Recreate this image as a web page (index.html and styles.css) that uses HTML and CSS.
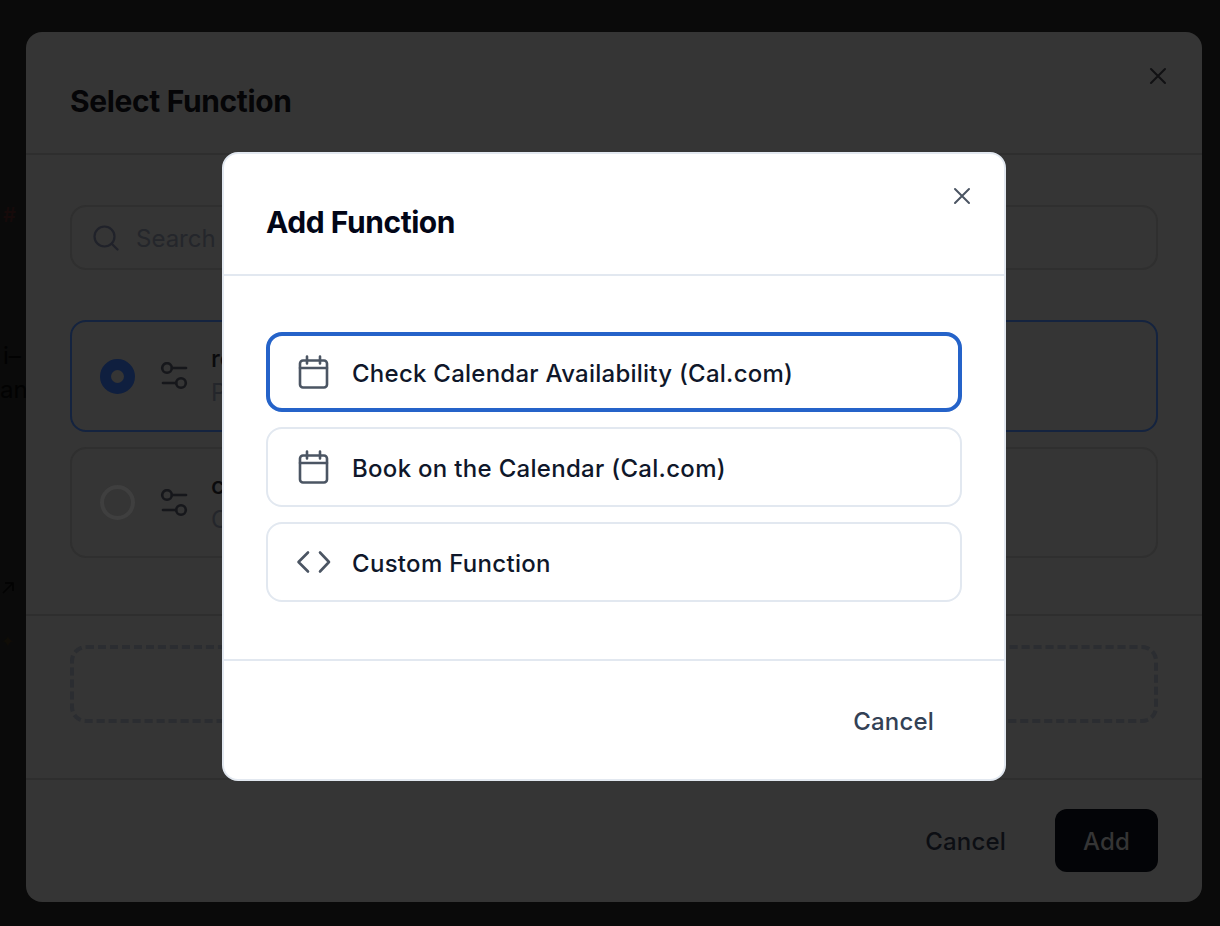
FILE: index.html
```html
<!DOCTYPE html>
<html lang="en">
<head>
  <meta charset="UTF-8">
  <title>Add Function</title>
  <link rel="stylesheet" href="styles.css">
</head>
<body>

<div class="page-bits">
  <span class="bit bit-hash">#</span>
  <span class="bit bit-hi">i–</span>
  <span class="bit bit-and">anc</span>
  <svg class="bit bit-arrow" viewBox="0 0 12 12"><path d="M1 11L11 1M3 1h8v8"/></svg>
  <span class="bit bit-star">✦</span>
</div>

<div class="outer-wrap">
  <div class="outer-modal">
    <div class="outer-head">
      <h2>Select Function</h2>
      <svg class="outer-close" viewBox="0 0 18 18"><path d="M2 2l14 14M16 2L2 16"/></svg>
    </div>

    <div class="outer-list">
      <div class="search">
        <svg viewBox="0 0 26 26"><circle cx="11.5" cy="11.5" r="10"/><path d="M19 19l5.500 5.500"/></svg>
        <span>Search</span>
      </div>

      <div class="fn-row fn-row-on">
        <span class="radio radio-on"></span>
        <svg class="sliders" viewBox="0 0 28 28"><circle cx="7" cy="6" r="4.800"/><path d="M12 6h14"/><circle cx="21" cy="21" r="4.800"/><path d="M3 21h13"/></svg>
        <div class="fn-text">
          <b>reserve_slot</b>
          <span>Preserve a slot</span>
        </div>
      </div>

      <div class="fn-row">
        <span class="radio"></span>
        <svg class="sliders" viewBox="0 0 28 28"><circle cx="7" cy="6" r="4.800"/><path d="M12 6h14"/><circle cx="21" cy="21" r="4.800"/><path d="M3 21h13"/></svg>
        <div class="fn-text">
          <b>check_slot</b>
          <span>Check a slot</span>
        </div>
      </div>
    </div>

    <div class="outer-add">
      <div class="dashed"></div>
    </div>

    <div class="outer-foot">
      <button class="ghost">Cancel</button>
      <button class="dark">Add</button>
    </div>
  </div>
</div>

<div class="inner-wrap">
  <div class="inner-modal">
    <div class="inner-head">
      <h2>Add Function</h2>
      <svg class="inner-close" viewBox="0 0 18 18"><path d="M2 2l14 14M16 2L2 16"/></svg>
    </div>

    <div class="inner-body">
      <div class="option option-on">
        <svg viewBox="0 0 36 36"><rect x="4" y="6.500" width="27" height="27" rx="3"/><path d="M4 14h27M11 2.500v7M24 2.500v7"/></svg>
        <span>Check Calendar Availability (Cal.com)</span>
      </div>
      <div class="option">
        <svg viewBox="0 0 36 36"><rect x="4" y="6.500" width="27" height="27" rx="3"/><path d="M4 14h27M11 2.500v7M24 2.500v7"/></svg>
        <span>Book on the Calendar (Cal.com)</span>
      </div>
      <div class="option">
        <svg viewBox="0 0 36 36"><path d="M12 8.500L2.500 18l9.500 9.500M24 8.500l9 9.500-9 9.500"/></svg>
        <span>Custom Function</span>
      </div>
    </div>

    <div class="inner-foot">
      <button class="cancel">Cancel</button>
    </div>
  </div>
</div>

</body>
</html>
```

FILE: styles.css
```css
* {
  box-sizing: border-box;
}

html, body {
  height: 100%;
}

body {
  margin: 0;
  background: #0a0a0a;
  font-family: Inter, "Liberation Sans", sans-serif;
  overflow: hidden;
}

h2 {
  margin: 0;
}

button {
  font-family: inherit;
  border: none;
  background: none;
  padding: 0;
}

/* bits of the page behind the dialogs */
.page-bits {
  position: absolute;
  inset: 0;
  font-size: 24px;
  color: #020202;
}

.bit {
  position: absolute;
}

.bit-hash {
  left: 3px;
  top: 203px;
  color: #160a0a;
  font-size: 20px;
  font-weight: 600;
}

.bit-hi {
  left: 3px;
  top: 341px;
}

.bit-and {
  left: 0;
  top: 375px;
}

.bit-arrow {
  left: 2px;
  top: 582px;
  width: 12px;
  height: 12px;
  fill: none;
  stroke: #020202;
  stroke-width: 1.500;
}

.bit-star {
  left: 1px;
  top: 631px;
  font-size: 16px;
  color: #100d07;
}

/* back dialog */
.outer-wrap {
  position: absolute;
  inset: 0;
  padding: 32px 18px 24px 26px;
}

.outer-modal {
  height: 870px;
  background: #353535;
  border-radius: 16px;
  display: flex;
  flex-direction: column;
}

.outer-head {
  position: relative;
  height: 123px;
  padding: 49px 44px 0;
  border-bottom: 2px solid #2e2e2e;
}

.outer-head h2 {
  font-size: 30px;
  line-height: 40px;
  font-weight: 650;
  letter-spacing: -0.37px;
  color: #050507;
}

.outer-close {
  position: absolute;
  top: 35px;
  right: 35px;
  width: 18px;
  height: 18px;
  fill: none;
  stroke: #111113;
  stroke-width: 2;
  stroke-linecap: round;
}

.outer-list {
  height: 461px;
  padding: 50px 44px 0;
  display: flex;
  flex-direction: column;
  gap: 15px;
  border-bottom: 2px solid #2e2e2e;
}

.search {
  height: 65px;
  margin-bottom: 35px;
  padding: 1px 0 0 21px;
  border: 2px solid #2f2f2f;
  border-radius: 16px;
  display: flex;
  align-items: center;
  gap: 17px;
  font-size: 24px;
  color: #24262b;
}

.search svg {
  width: 26px;
  height: 26px;
  fill: none;
  stroke: #20222a;
  stroke-width: 2.2;
  stroke-linecap: round;
}

.fn-row {
  height: 111px;
  padding-left: 28px;
  border: 2px solid #2f2f2f;
  border-radius: 16px;
  display: flex;
  align-items: center;
  gap: 24px;
}

.fn-row-on {
  height: 112px;
  border-color: #14233f;
}

.radio {
  width: 35px;
  height: 35px;
  border: 4px solid #3f3f3f;
  border-radius: 50%;
  flex-shrink: 0;
  margin-right: 1px;
}

.radio-on {
  border: 11px solid #0f1f3f;
  background: #353535;
}

.sliders {
  width: 28px;
  height: 28px;
  flex-shrink: 0;
  fill: none;
  stroke: #16171b;
  stroke-width: 2.600;
  stroke-linecap: round;
}

.fn-text {
  display: flex;
  flex-direction: column;
  gap: 4px;
  font-size: 24px;
  line-height: 30px;
  margin-left: -1px;
}

.fn-text b {
  font-weight: 500;
  color: #0a0a0c;
}

.fn-text span {
  color: #24262b;
}

.outer-add {
  height: 164px;
  padding: 29px 44px 0;
  border-bottom: 2px solid #2e2e2e;
}

.dashed {
  height: 78px;
  border: 4px dashed #2b2d31;
  border-radius: 16px;
}

.outer-foot {
  flex: 1;
  padding: 0 44px 30px;
  display: flex;
  align-items: flex-end;
  justify-content: flex-end;
  gap: 49px;
}

.ghost {
  height: 61px;
  font-size: 24px;
  font-weight: 500;
  letter-spacing: 0.2px;
  color: #0c0e13;
}

.dark {
  width: 103px;
  height: 63px;
  padding-top: 1px;
  background: #030407;
  border-radius: 12px;
  font-size: 24px;
  font-weight: 500;
  letter-spacing: 0.2px;
  color: #353535;
}

/* front dialog */
.inner-wrap {
  position: absolute;
  inset: 0;
  padding: 152px 214px 145px 222px;
}

.inner-modal {
  height: 629px;
  background: #fff;
  border: 2px solid #e2e8f0;
  border-radius: 16px;
  display: flex;
  flex-direction: column;
}

.inner-head {
  position: relative;
  height: 122px;
  padding: 48px 42px 0;
  border-bottom: 2px solid #e2e8f0;
}

.inner-head h2 {
  font-size: 30px;
  line-height: 40px;
  font-weight: 650;
  letter-spacing: -0.45px;
  color: #020617;
}

.inner-close {
  position: absolute;
  top: 33px;
  right: 33px;
  width: 18px;
  height: 18px;
  fill: none;
  stroke: #4b5563;
  stroke-width: 2;
  stroke-linecap: round;
}

.inner-body {
  height: 385px;
  padding: 56px 42px 0;
  display: flex;
  flex-direction: column;
  gap: 15px;
  border-bottom: 2px solid #e2e8f0;
}

.option {
  height: 80px;
  padding-left: 28px;
  border: 2px solid #e2e8f0;
  border-radius: 16px;
  display: flex;
  align-items: center;
  gap: 20px;
  font-size: 24px;
  font-weight: 500;
  letter-spacing: 0.3px;
  color: #0f172a;
}

.option span {
  padding-top: 2px;
}

.option-on {
  padding-left: 26px;
  border: 4px solid #2563c9;
  letter-spacing: 0.25px;
}

.option svg {
  width: 36px;
  height: 36px;
  flex-shrink: 0;
  fill: none;
  stroke: #4b5563;
  stroke-width: 2.600;
  stroke-linecap: round;
  stroke-linejoin: round;
}

.inner-foot {
  flex: 1;
  padding: 2px 70px 0 0;
  display: flex;
  align-items: center;
  justify-content: flex-end;
}

.cancel {
  font-size: 24px;
  font-weight: 500;
  letter-spacing: 0.2px;
  color: #334155;
}
```
